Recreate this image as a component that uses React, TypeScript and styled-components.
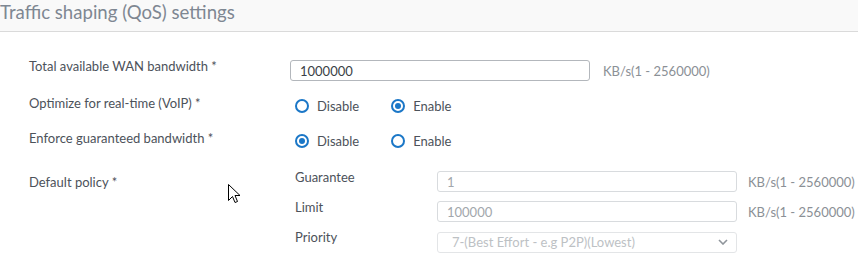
import styled, { createGlobalStyle } from "styled-components";

const GlobalStyle = createGlobalStyle`
  body {
    margin: 0;
    background: #fff;
    font-family: Lato, "Liberation Sans", sans-serif;
  }
`;

const Page = styled.div`
  position: relative;
  width: 858px;
  height: 278px;
  overflow: hidden;
  background: #fff;
`;

const Header = styled.div`
  height: 31px;
  background: #f9f9f9;
  border-bottom: 1px solid #dadada;
`;

const Title = styled.h2`
  margin: 0;
  font-size: 18.6px;
  line-height: 24px;
  font-weight: 400;
  color: #7e8792;
`;

const Form = styled.div`
  display: flex;
  flex-direction: column;
  padding: 28px 0 0 29px;
`;

const Row = styled.div<{ $top?: number }>`
  display: grid;
  grid-template-columns: 261px 1fr;
  align-items: start;
  margin-top: ${(p) => p.$top ?? 0}px;
`;

const Label = styled.div<{ $offset?: number }>`
  font-size: 13px;
  line-height: 14px;
  color: #4c525a;
  margin-top: ${(p) => p.$offset ?? 0}px;
`;

const Control = styled.div`
  display: flex;
  align-items: center;
`;

const TextInput = styled.input`
  box-sizing: border-box;
  width: 300px;
  height: 21px;
  padding: 0 9px;
  border: 1px solid #b3b7bc;
  border-radius: 3px;
  font-family: inherit;
  font-size: 13px;
  color: #3a3f46;
  background: #fff;
  outline: none;

  &:disabled {
    border-color: #d8dbde;
    color: #a2a7ac;
  }
`;

const Unit = styled.span<{ $gap: number }>`
  margin-left: ${(p) => p.$gap}px;
  font-size: 13px;
  color: #8b9096;
  white-space: nowrap;
`;

const RadioGroup = styled.div`
  display: flex;
  align-items: center;
  gap: 32px;
  padding-left: 5px;
  height: 20px;
`;

const RadioOption = styled.label`
  display: flex;
  align-items: center;
  gap: 8px;
  font-size: 13px;
  line-height: 20px;
  color: #4c525a;
`;

const RadioCircle = styled.span<{ $checked?: boolean }>`
  box-sizing: border-box;
  width: 14px;
  height: 14px;
  border: 2px solid #1b77c7;
  border-radius: 50%;
  display: flex;
  align-items: center;
  justify-content: center;

  &::after {
    content: "";
    width: 6px;
    height: 6px;
    border-radius: 50%;
    background: #1b77c7;
    display: ${(p) => (p.$checked ? "block" : "none")};
  }
`;

const PolicyGrid = styled.div`
  display: grid;
  grid-template-columns: 147px 300px auto;
  row-gap: 9px;
  align-items: center;
`;

const SubLabel = styled.div`
  align-self: start;
  margin-top: -1px;
  padding-left: 5px;
  font-size: 13px;
  line-height: 14px;
  color: #4c525a;
`;

const SelectWrap = styled.div`
  position: relative;
  width: 300px;
`;

const Select = styled.select`
  box-sizing: border-box;
  width: 300px;
  height: 21px;
  padding: 0 28px 0 14px;
  border: 1px solid #d8dbde;
  border-radius: 3px;
  background: #fff;
  font-family: inherit;
  font-size: 13px;
  color: #a2a7ac;
  appearance: none;
  outline: none;
`;

const Chevron = styled.svg`
  position: absolute;
  right: 9px;
  top: 8px;
  pointer-events: none;
`;

const Cursor = styled.svg`
  position: absolute;
  left: 228px;
  top: 184px;
`;

function Radio({ label, checked }: { label: string; checked?: boolean }) {
  return (
    <RadioOption>
      <RadioCircle $checked={checked} />
      {label}
    </RadioOption>
  );
}

export default function App() {
  return (
    <Page>
      <GlobalStyle />
      <Header>
        <Title>Traffic shaping (QoS) settings</Title>
      </Header>
      <Form>
        <Row>
          <Label $offset={-1}>Total available WAN bandwidth *</Label>
          <Control>
            <TextInput defaultValue="1000000" />
            <Unit $gap={13}>KB/s(1 - 2560000)</Unit>
          </Control>
        </Row>
        <Row $top={15}>
          <Label>Optimize for real-time (VoIP) *</Label>
          <RadioGroup>
            <Radio label="Disable" />
            <Radio label="Enable" checked />
          </RadioGroup>
        </Row>
        <Row $top={15}>
          <Label>Enforce guaranteed bandwidth *</Label>
          <RadioGroup>
            <Radio label="Disable" checked />
            <Radio label="Enable" />
          </RadioGroup>
        </Row>
        <Row $top={20}>
          <Label $offset={4}>Default policy *</Label>
          <PolicyGrid>
            <SubLabel>Guarantee</SubLabel>
            <TextInput disabled defaultValue="1" />
            <Unit $gap={11}>KB/s(1 - 2560000)</Unit>
            <SubLabel>Limit</SubLabel>
            <TextInput disabled defaultValue="100000" />
            <Unit $gap={11}>KB/s(1 - 2560000)</Unit>
            <SubLabel>Priority</SubLabel>
            <SelectWrap>
              <Select disabled defaultValue="7">
                <option value="7">7-(Best Effort - e.g P2P)(Lowest)</option>
              </Select>
              <Chevron width="10" height="6" viewBox="0 0 10 6">
                <path d="M1 1l4 4 4-4" fill="none" stroke="#8f959b" strokeWidth="1.6" />
              </Chevron>
            </SelectWrap>
          </PolicyGrid>
        </Row>
      </Form>
      <Cursor width="13" height="21" viewBox="0 0 13 21">
        <path
          d="M0.5 0.5 L0.5 16.5 L4.5 12.5 L7 18.5 L9.5 17.5 L7 11.5 L12 11.5 Z"
          fill="#fff"
          stroke="#000"
          strokeWidth="1"
          strokeLinejoin="miter"
        />
      </Cursor>
    </Page>
  );
}
